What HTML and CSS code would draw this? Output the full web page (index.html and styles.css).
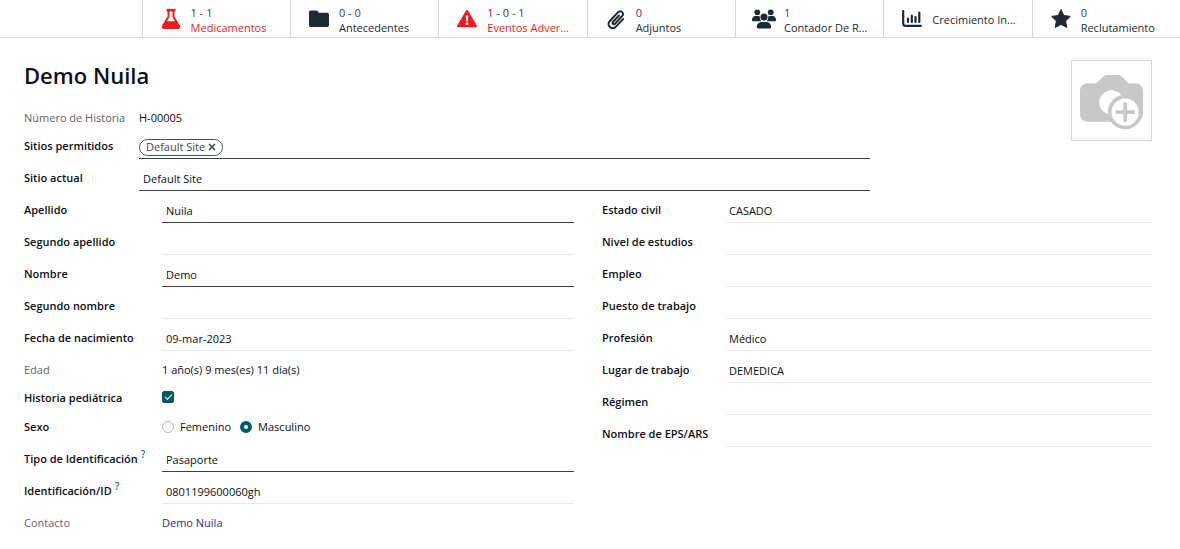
FILE: index.html
```html
<!DOCTYPE html>
<html lang="es">
<head>
<meta charset="utf-8">
<title>Demo Nuila</title>
<link rel="stylesheet" href="styles.css">
</head>
<body>
<nav class="stats">
  <button type="button" class="stat stat-alert">
    <svg class="stat-icon" viewBox="0 0 20 20"><path fill="currentColor" fill-rule="evenodd" d="M5.500 0h9v2.500h-1v5l5.400 9c1 1.800 0 3.500-2 3.500H3.100c-2 0-3-1.700-2-3.500l5.400-9v-5h-1zM8.500 2.500v5.600l-2.500 4.200h8l-2.500-4.200V2.500z"/></svg>
    <span class="stat-text"><span class="stat-value">1 - 1</span><span>Medicamentos</span></span>
  </button>
  <button type="button" class="stat">
    <svg class="stat-icon" viewBox="0 0 20 20"><path fill="currentColor" d="M1.800 1.500h5.500c.8 0 1.300.3 1.700 1l.8 1.200h8.400c1 0 1.800.8 1.800 1.800v10.700c0 1-.8 1.800-1.800 1.800H1.800C.8 18 0 17.200 0 16.200V3.300c0-1 .8-1.800 1.800-1.800z"/></svg>
    <span class="stat-text"><span class="stat-value">0 - 0</span><span>Antecedentes</span></span>
  </button>
  <button type="button" class="stat stat-alert">
    <svg class="stat-icon" viewBox="0 0 20 20"><path fill="currentColor" fill-rule="evenodd" d="M8.900 1.700c.5-.9 1.700-.9 2.200 0l8.700 14.700c.5.900 0 1.900-1.100 1.900H1.300c-1.100 0-1.600-1-1.100-1.900zM8.800 6.500l.3 5.800h1.800l.3-5.800zM8.800 13.600v2.300h2.400v-2.300z"/></svg>
    <span class="stat-text"><span class="stat-value">1 - 0 - 1</span><span>Eventos Adver...</span></span>
  </button>
  <button type="button" class="stat">
    <svg class="stat-icon" viewBox="0 0 20 20"><path fill="none" stroke="currentColor" stroke-width="2" stroke-linecap="round" d="M13 6.500l-6 6.300c-1.300 1.400.6 3.300 2 1.900l7-7.400c2.800-3-1.200-6.800-4.100-3.900L4 11.700c-4.200 4.500 1.800 10.200 6.200 5.700l6.900-7.300"/></svg>
    <span class="stat-text"><span class="stat-value">0</span><span>Adjuntos</span></span>
  </button>
  <button type="button" class="stat">
    <svg class="stat-icon stat-icon-wide" viewBox="0 0 25 20"><g fill="currentColor"><circle cx="5.500" cy="3" r="3"/><circle cx="19.500" cy="3" r="3"/><circle cx="12.500" cy="8" r="3.700"/><path d="M3.500 7h3c.7 0 1.300.2 1.700.5-.2 2 .4 3.600 1.500 4.800H1.200c-.7 0-1.200-.4-1.200-1C0 8.800 1.300 7 3.500 7zM21.500 7h-3c-.7 0-1.300.2-1.700.5.2 2-.4 3.600-1.500 4.800h8.500c.7 0 1.200-.4 1.200-1C25 8.800 23.700 7 21.500 7zM10.300 13.200h4.400c3 0 5.300 2.400 5.300 5.200 0 .9-.6 1.400-1.400 1.400H6.400c-.8 0-1.400-.5-1.400-1.400 0-2.800 2.300-5.200 5.300-5.200z"/></g></svg>
    <span class="stat-text"><span class="stat-value">1</span><span>Contador De R...</span></span>
  </button>
  <button type="button" class="stat">
    <svg class="stat-icon" viewBox="0 0 20 20"><path fill="none" stroke="currentColor" stroke-width="2.200" stroke-linecap="round" stroke-linejoin="round" d="M1.200 2v12.500c0 1.500.5 2.300 2 2.300h15.600M6 13V9.500M9.800 13V6.500M13.500 13V8M17.300 13V3.500"/></svg>
    <span class="stat-text"><span>Crecimiento In...</span></span>
  </button>
  <button type="button" class="stat">
    <svg class="stat-icon" viewBox="0 0 20 20"><path fill="currentColor" stroke="currentColor" stroke-linejoin="round" d="M10 .6l2.800 5.900 6.500.9-4.700 4.600 1.200 6.500L10 15.400l-5.800 3.100 1.200-6.500L.7 7.400l6.500-.9z"/></svg>
    <span class="stat-text"><span class="stat-value">0</span><span>Reclutamiento</span></span>
  </button>
</nav>

<main class="sheet">
  <header class="head">
    <div class="head-main">
      <h1 class="title">Demo Nuila</h1>
      <div class="general">
        <div class="row row-number"><span class="label label-muted">Número de Historia</span><span class="value">H-00005</span></div>
        <div class="row"><label class="label" for="sites">Sitios permitidos</label>
          <div class="tags field-strong"><span class="tag">Default Site<button type="button" class="tag-remove" aria-label="Quitar"><svg class="tag-x" viewBox="0 0 8 8"><path fill="none" stroke="currentColor" stroke-width="1.600" d="M1 1l6 6M7 1l-6 6"/></svg></button></span><input class="tag-input" id="sites" type="text"></div></div>
        <div class="row"><label class="label" for="site">Sitio actual</label><input class="field field-strong" id="site" type="text" value="Default Site"></div>
      </div>
    </div>
    <button type="button" class="photo" aria-label="Agregar foto">
      <svg class="photo-icon" viewBox="0 0 62 54"><path fill="#c8c8c8" d="M8 8h8l7-6.500C24 .5 25 0 26.500 0h11C39 0 40 .5 41 1.500L48 8h6c5 0 8 3 8 8v22c0 5-3 8-8 8H8c-5 0-8-3-8-8V16c0-5 3-8 8-8z"/><circle cx="31" cy="27" r="12" fill="#fff"/><circle cx="44.500" cy="36.500" r="15.200" fill="#fff"/><circle cx="44.500" cy="36.500" r="15.200" fill="none" stroke="#c8c8c8" stroke-width="3.600"/><path stroke="#c8c8c8" stroke-width="3.600" d="M44.500 27v19M35 36.500h19"/></svg>
    </button>
  </header>

  <div class="groups">
    <section class="group group-left">
      <div class="row"><label class="label" for="f1">Apellido</label><input class="field field-strong" id="f1" type="text" value="Nuila"></div>
      <div class="row"><label class="label" for="f2">Segundo apellido</label><input class="field" id="f2" type="text"></div>
      <div class="row"><label class="label" for="f3">Nombre</label><input class="field field-strong" id="f3" type="text" value="Demo"></div>
      <div class="row"><label class="label" for="f4">Segundo nombre</label><input class="field" id="f4" type="text"></div>
      <div class="row"><label class="label" for="f5">Fecha de nacimiento</label><input class="field" id="f5" type="text" value="09-mar-2023"></div>
      <div class="row"><span class="label label-muted">Edad</span><span class="value">1 año(s) 9 mes(es) 11 día(s)</span></div>
      <div class="row row-check"><label class="label" for="f6">Historia pediátrica</label><input class="check" id="f6" type="checkbox" checked></div>
      <div class="row row-radio"><span class="label" id="sex">Sexo</span>
        <div class="radios" role="radiogroup" aria-labelledby="sex">
          <label class="option"><input class="radio" type="radio" name="sex">Femenino</label>
          <label class="option"><input class="radio" type="radio" name="sex" checked>Masculino</label>
        </div></div>
      <div class="row"><label class="label" for="f7">Tipo de Identificación<sup class="help">?</sup></label><input class="field field-strong" id="f7" type="text" value="Pasaporte"></div>
      <div class="row"><label class="label" for="f8">Identificación/ID<sup class="help">?</sup></label><input class="field" id="f8" type="text" value="0801199600060gh"></div>
      <div class="row"><span class="label label-muted">Contacto</span><a class="value link" href="#">Demo Nuila</a></div>
    </section>
    <section class="group group-right">
      <div class="row"><label class="label" for="g1">Estado civil</label><input class="field" id="g1" type="text" value="CASADO"></div>
      <div class="row"><label class="label" for="g2">Nivel de estudios</label><input class="field" id="g2" type="text"></div>
      <div class="row"><label class="label" for="g3">Empleo</label><input class="field" id="g3" type="text"></div>
      <div class="row"><label class="label" for="g4">Puesto de trabajo</label><input class="field" id="g4" type="text"></div>
      <div class="row"><label class="label" for="g5">Profesión</label><input class="field" id="g5" type="text" value="Médico"></div>
      <div class="row"><label class="label" for="g6">Lugar de trabajo</label><input class="field" id="g6" type="text" value="DEMEDICA"></div>
      <div class="row"><label class="label" for="g7">Régimen</label><input class="field" id="g7" type="text"></div>
      <div class="row"><label class="label" for="g8">Nombre de EPS/ARS</label><input class="field" id="g8" type="text"></div>
    </section>
  </div>
</main>
</body>
</html>
```
FILE: styles.css
```css
* { box-sizing: border-box; }

body {
  margin: 0;
  background: #fff;
  color: #0b0f18;
  font: 11px/20px "Segoe UI", "Open Sans", "Noto Sans", sans-serif;
}

button, input { font: inherit; color: inherit; }

/* Stat buttons */
.stats {
  display: grid;
  grid-template-columns: repeat(7, minmax(0, 1fr));
  padding-left: 12%;
  border-bottom: 1px solid #d8dadd;
}
.stat {
  display: flex;
  align-items: center;
  gap: 8px;
  min-width: 0;
  height: 37px;
  padding: 0 0 0 16px;
  border: 0;
  border-left: 1px solid #d8dadd;
  background: none;
  color: #1f2933;
  text-align: left;
  line-height: 15px;
  white-space: nowrap;
}
.stat-alert { color: #f01c1c; }
.stat-icon { flex: none; width: 24px; height: 20px; }
.stat-text { display: flex; flex-direction: column; padding-top: 2px; }
.stat-value { color: #3b3486; }

/* Sheet */
.sheet { padding: 22px 28px 0 24px; }
.head { display: flex; justify-content: space-between; }
.head-main { width: 75%; }
.title {
  margin: 0 0 18px;
  font-size: 22px;
  line-height: 30px;
  font-weight: 600;
}
.photo {
  width: 81px;
  height: 81px;
  padding: 4px 0 0;
  border: 1px solid #d5dddd;
  background: #fff;
}
.photo-icon { display: block; width: 63px; margin: 0 auto; }

/* Rows */
.row {
  display: grid;
  grid-template-columns: var(--label) 1fr;
  height: 32px;
}
.general { --label: 115px; }
.group-left { --label: 138px; }
.group-right { --label: 123px; }
.groups {
  display: grid;
  grid-template-columns: 1fr 1fr;
  gap: 28px;
}
.row-number { height: 19px; }
.row-check { height: 26px; }
.row-radio { height: 31px; }
.label {
  padding-top: 9px;
  font-weight: 600;
  white-space: nowrap;
}
.label-muted { font-weight: 400; color: #5f636f; }
.row-number > .label, .row-number > .value { padding-top: 0; }
.row-check > .label { padding-top: 5px; }
.row-radio > .label { padding-top: 8px; }
.value { padding-top: 9px; }
.link { color: #2f2b70; text-decoration: none; }
.help {
  margin-left: 3px;
  color: #017e84;
  font-size: 10px;
  line-height: 0;
}
.field {
  width: 100%;
  height: 24px;
  margin-top: 8px;
  padding: 0 4px;
  border: 0;
  border-bottom: 1px solid #e7e9ed;
  background: none;
  outline: 0;
}
.field-strong { border-bottom: 1px solid #374151; }

.tags { display: flex; align-items: center; padding-top: 11px; }
.tag {
  display: flex;
  align-items: center;
  gap: 3px;
  height: 17px;
  margin-bottom: 2px;
  padding: 0 6px;
  border: 1px solid #4b5058;
  border-radius: 9px;
  color: #40464f;
}
.tag-remove { display: flex; padding: 0; border: 0; background: none; }
.tag-x { width: 8px; height: 8px; }
.tag-input { flex: 1; min-width: 0; height: 16px; border: 0; outline: 0; background: none; }

.check, .radio { appearance: none; width: 12px; height: 12px; margin: 0; }
.check {
  display: grid;
  place-items: center;
  margin-top: 8px;
  border: 1px solid #b5b8bd;
  border-radius: 2px;
}
.check:checked { border-color: #035a63; background: #035a63; }
.check:checked::after {
  content: "";
  width: 6px;
  height: 3px;
  margin-bottom: 2px;
  border: solid #fff;
  border-width: 0 0 1px 1px;
  rotate: -45deg;
}
.radios { display: flex; gap: 9px; padding-top: 8px; }
.option { display: flex; align-items: center; gap: 6px; height: 20px; }
.radio { border: 1px solid #b5b8bd; border-radius: 50%; }
.radio:checked { border: 4px solid #035a63; }
```
